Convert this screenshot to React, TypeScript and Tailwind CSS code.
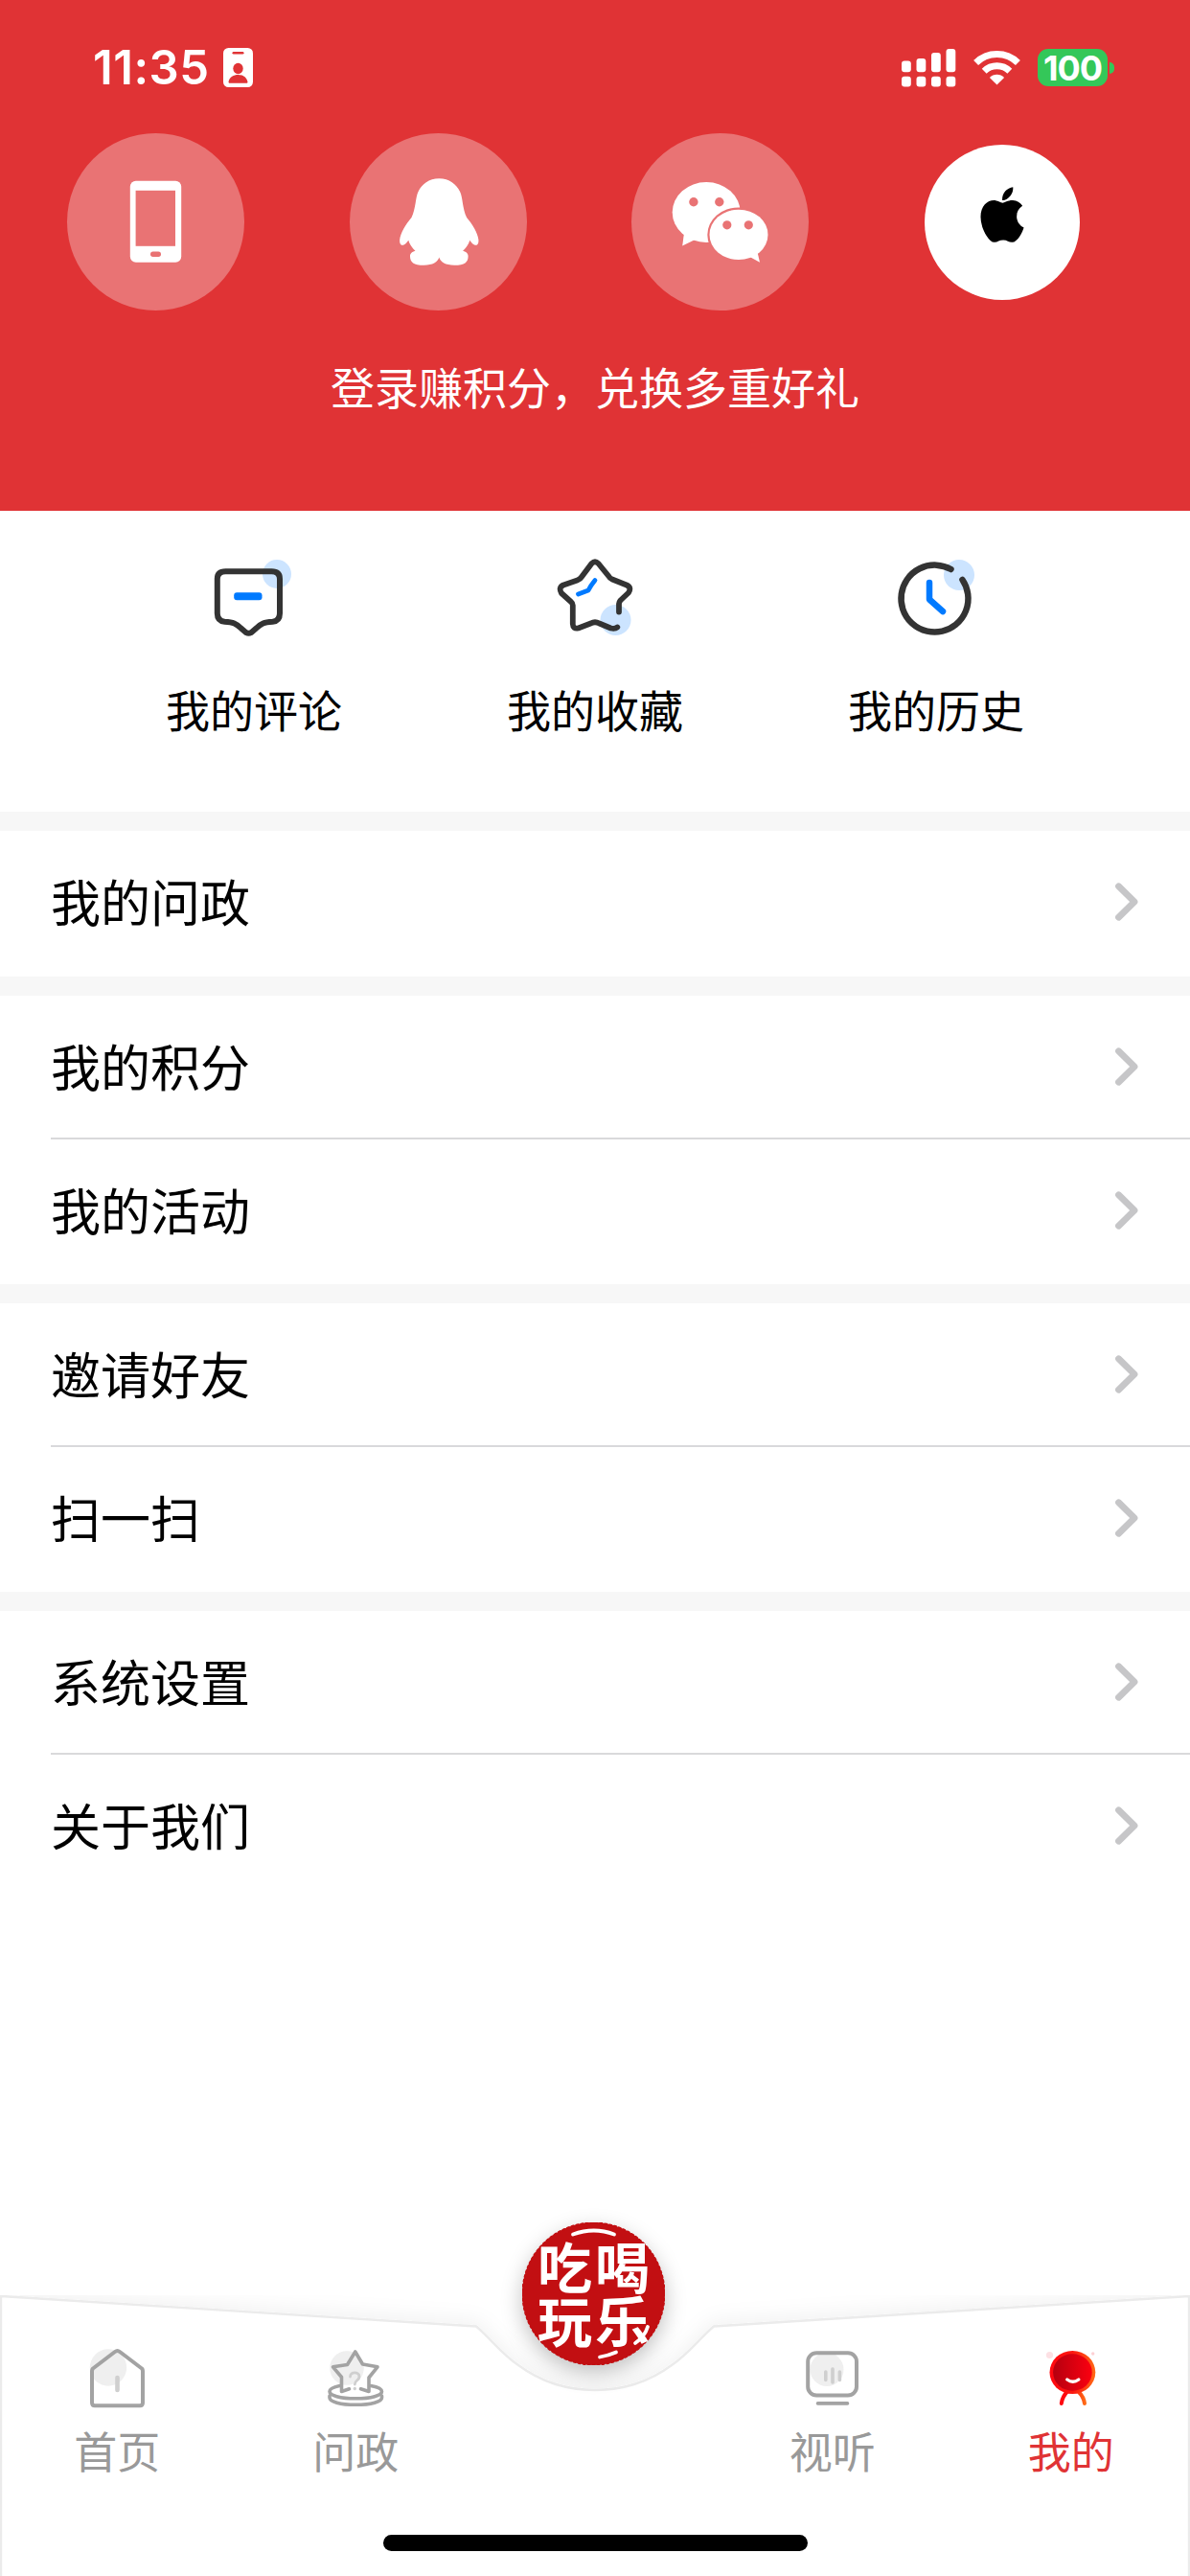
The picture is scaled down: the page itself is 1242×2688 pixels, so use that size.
import type { ReactNode } from "react";
import { FaApple } from "react-icons/fa";

function BadgeIcon() {
  return (
    <svg className="h-[41px] w-[31px]" viewBox="0 0 31 41">
      <rect width="31" height="41" rx="5.5" fill="#fff" />
      <rect x="9.5" y="4" width="12" height="2.6" rx="1.3" fill="#e03335" />
      <ellipse cx="15.5" cy="21.5" rx="5.2" ry="5.8" fill="#e03335" />
      <path d="M5.5 35.5C6.5 30 11 28 15.500 28S24.500 30 25.500 35.500C25.500 36.500 25 36.800 24 36.800H7C6 36.800 5.500 36.500 5.500 35.500Z" fill="#e03335" />
    </svg>
  );
}

function SignalIcon() {
  const tops = [12.5, 10, 4, 0];
  return (
    <svg className="h-[40px] w-[57px]" viewBox="0 0 57 40" fill="#fff">
      {tops.map((top, i) => (
        <g key={i}>
          <rect x={i * 15.5} y={top} width="9.8" height={24.3 - top} rx="3" />
          <rect x={i * 15.5} y="28.800" width="9.800" height="10.700" rx="3" />
        </g>
      ))}
    </svg>
  );
}

function WifiIcon() {
  return (
    <svg className="h-[37px] w-[49px]" viewBox="0 0 49 37">
      <g fill="none" stroke="#fff" strokeWidth="7">
        <path d="M2.600 13.400A31.200 31.200 0 0 1 46.400 13.400" />
        <path d="M11.200 22.300A19 19 0 0 1 37.800 22.300" />
      </g>
      <path d="M24.500 36.600L16.900 28.900A10.800 10.800 0 0 1 32.100 28.900Z" fill="#fff" />
    </svg>
  );
}

function StatusBar() {
  return (
    <div className="flex h-[139px] items-center justify-between pt-[2px] pr-[79px] pl-[97px]">
      <div className="flex items-center">
        <span className="w-[136px] font-[Inter] text-[49px] leading-none font-semibold tracking-[0.500px] whitespace-nowrap text-white">11:35</span>
        <BadgeIcon />
      </div>
      <div className="flex items-center">
        <SignalIcon />
        <div className="w-[18px]" />
        <WifiIcon />
        <div className="w-[18px]" />
        <div className="flex h-[39px] w-[73px] items-center justify-center rounded-[11px] bg-[#34c759] font-[Inter] text-[36px] leading-none font-bold tracking-[-1px] text-white">
          100
        </div>
        <div className="ml-[2px] h-[12px] w-[5px] rounded-r-full bg-[#34c759]" />
      </div>
    </div>
  );
}

function Disc({ children }: { children: ReactNode }) {
  return <div className="size-[185px] rounded-full bg-[#e97374]">{children}</div>;
}

function PhoneLogin() {
  return (
    <Disc>
      <svg className="size-full" viewBox="70 139 185 185">
        <rect x="135.800" y="188.700" width="53.400" height="85" rx="6" fill="#fff" />
        <rect x="141.600" y="198.800" width="41.400" height="58" fill="#e97374" />
        <rect x="157" y="262.500" width="11" height="5.500" rx="2.700" fill="#e97374" />
      </svg>
    </Disc>
  );
}

function QqLogin() {
  return (
    <Disc>
      <svg className="size-full" viewBox="364.500 139 185 185">
        <path
          d="M457.800 186.300C447 186.500 440 192 436 200C433 206 433.500 218 429 227C423 234 417.500 243 416.700 250C416.300 255 418 256.500 421 255.500C423.500 254.500 424.500 252 425.800 250.700C427 255 429.500 258.500 433 261.700C429 263 427.400 264.500 427.500 267.500C427.500 273.500 431 276.800 442 276.800C451 276.800 456.500 273.500 457.800 268.600C459.100 273.500 464.600 276.800 473.600 276.800C484.600 276.800 488.100 273.500 488.100 267.500C488.200 264.500 486.600 263 482.600 261.700C486.100 258.500 488.600 255 489.800 250.700C491.100 252 492.100 254.500 494.600 255.500C497.600 256.500 499.300 255 498.900 250C498.100 243 492.600 234 486.600 227C482.100 218 482.600 206 479.600 200C475.600 192 468.600 186.500 457.800 186.300Z"
          fill="#fff"
        />
      </svg>
    </Disc>
  );
}

function WechatLogin() {
  return (
    <Disc>
      <svg className="size-full" viewBox="659.500 139 185 185">
        <g fill="#fff">
          <ellipse cx="737.700" cy="221.500" rx="35.500" ry="31.500" />
          <path d="M714.500 243L712.700 256.500L727 249.500Z" />
        </g>
        <ellipse cx="771.500" cy="244.900" rx="32.700" ry="28.500" fill="#e97374" />
        <g fill="#fff">
          <ellipse cx="771.500" cy="244.900" rx="30.500" ry="26.200" />
          <path d="M783 268L793.500 273.800L791 263Z" />
        </g>
        <g fill="#e97374">
          <circle cx="724.400" cy="210.700" r="4.700" />
          <circle cx="751.300" cy="210.700" r="4.700" />
          <circle cx="759.300" cy="234.800" r="4.600" />
          <circle cx="781.800" cy="234.800" r="4.600" />
        </g>
      </svg>
    </Disc>
  );
}

function AppleLogin() {
  return (
    <div className="flex size-[185px] items-center justify-center">
      <div className="flex size-[162px] items-center justify-center rounded-full bg-white pb-[15px]">
        <FaApple preserveAspectRatio="none" className="h-[66px] w-[46px] text-black" />
      </div>
    </div>
  );
}

function CommentIcon() {
  return (
    <svg className="h-[84px] w-[84px]" viewBox="223.500 581 84 84">
      <circle cx="289.500" cy="599" r="15" fill="#cce4ff" />
      <path d="M236 596.300H284Q292.500 596.300 292.500 604V640Q292.500 648 285 648.700C276 649.300 273 650.500 268 655.500L262.500 660.200Q260 661.500 257.500 660.200L252 655.500C247 650.500 244 649.300 235 648.700Q227.300 648 227.300 640V604Q227.300 596.300 236 596.300Z" fill="none" stroke="#333" strokeWidth="6" strokeLinejoin="round" />
      <rect x="244.700" y="618.200" width="29.300" height="8" rx="3" fill="#007aff" />
    </svg>
  );
}

function StarIcon() {
  return (
    <svg className="h-[84px] w-[84px]" viewBox="578.500 581 84 84">
      <circle cx="642" cy="647" r="16" fill="#cce4ff" />
      <g fill="none" strokeLinecap="round" strokeLinejoin="round">
        <path d="M645.500 638.500V630Q645.500 628.500 647 626.500L655.500 618.500Q659 613 653.500 610.500L638.500 604.500Q636 603.500 635 601.500L624 588Q620.500 584.500 617 588L606.500 602Q605 604.500 602 605.500L587.500 610.500Q582 613 585.500 619L595.500 628Q597.300 629.500 597.300 631.500V651Q597.500 656.500 603 655.500L616 650.500Q620.500 648 625 650.500L637 655.500Q641.500 656.500 643.800 654.500" stroke="#333" strokeWidth="5.800" />
        <path d="M603 620L613.500 616Q616 611 620.500 605.500" stroke="#007aff" strokeWidth="4.800" />
      </g>
    </svg>
  );
}

function HistoryIcon() {
  return (
    <svg className="h-[84px] w-[84px]" viewBox="934 581 84 84">
      <circle cx="1000" cy="600" r="16" fill="#cce4ff" />
      <g fill="none" strokeLinecap="round" strokeLinejoin="round">
        <path d="M991.500 594A35 35 0 1 0 1003.500 605" stroke="#333" strokeWidth="6.500" />
        <path d="M969 608V625.500L983 638" stroke="#007aff" strokeWidth="6.500" />
      </g>
    </svg>
  );
}

const shortcuts = [
  { label: "我的评论", icon: <CommentIcon /> },
  { label: "我的收藏", icon: <StarIcon /> },
  { label: "我的历史", icon: <HistoryIcon /> },
];

const menuGroups = [["我的问政"], ["我的积分", "我的活动"], ["邀请好友", "扫一扫"], ["系统设置", "关于我们"]];

function Chevron() {
  return (
    <svg className="h-[40px] w-[24px]" viewBox="0 0 24 40">
      <path d="M3.500 3.800L20 20L3.500 36.200" fill="none" stroke="#c6c6c8" strokeWidth="6.800" strokeLinecap="round" strokeLinejoin="round" />
    </svg>
  );
}

function MenuRow({ label, divided }: { label: string; divided: boolean }) {
  return (
    <div className={divided ? "ml-[53px] h-[149px] border-t-2 border-[#d9d9db]" : "ml-[53px] h-[148px]"}>
      <div className="flex h-full items-center justify-between pr-[54px]">
        <span className="pb-[2px] text-[52px] leading-[60px] text-black">{label}</span>
        <Chevron />
      </div>
    </div>
  );
}

function HomeIcon() {
  return (
    <svg className="h-[66px] w-[66px]" viewBox="89 2449 66 66">
      <circle cx="113" cy="2470.500" r="19.200" fill="#efefef" />
      <g fill="none" strokeLinejoin="round" strokeLinecap="round">
        <path d="M120 2454Q122.500 2452 125 2454L148 2471.500Q149 2472.500 149 2474V2507Q149 2510.300 146 2510.300H99Q96 2510.300 96 2507V2474Q96 2472.500 97 2471.500Z" stroke="#a3a3a3" strokeWidth="4" />
        <path d="M122.500 2481V2494" stroke="#cfcfcf" strokeWidth="4.600" />
      </g>
    </svg>
  );
}

function PoliticsIcon() {
  return (
    <svg className="h-[66px] w-[66px]" viewBox="337 2449 66 66">
      <circle cx="361" cy="2471" r="17.800" fill="#efefef" />
      <g fill="none" stroke="#a3a3a3" strokeWidth="3.600" strokeLinejoin="round" strokeLinecap="round">
        <path d="M353.500 2489.500C346 2491 343 2493 343 2495.500C343 2499.500 354 2502.800 370.300 2502.800C386.500 2502.800 397.500 2499.500 397.500 2495.500C397.500 2493 394.500 2491 386 2489.500" />
        <path d="M343 2500V2502C343 2506 354 2509.300 370.300 2509.300C386.500 2509.300 397.500 2506 397.500 2502V2500" />
        <path d="M363.500 2492.800L355.500 2495.500V2480.500L346.500 2469.800L361.500 2467.500L369.800 2454L377.500 2467L393 2469.800L384 2481V2495.500L375.500 2492.800" />
      </g>
      <path d="M364.500 2480C364.500 2474.500 374 2474.500 374 2480C374 2484 369.500 2483.500 369.300 2488" fill="none" stroke="#cfcfcf" strokeWidth="2.800" strokeLinecap="round" />
      <circle cx="369.300" cy="2492.500" r="1.700" fill="#cfcfcf" />
    </svg>
  );
}

function MediaIcon() {
  return (
    <svg className="h-[66px] w-[66px]" viewBox="834 2449 66 66">
      <circle cx="861" cy="2472.500" r="17.500" fill="#efefef" />
      <rect x="841.200" y="2455.200" width="50.800" height="44.300" rx="9" fill="none" stroke="#a3a3a3" strokeWidth="4" />
      <g strokeLinecap="round" stroke="#cfcfcf" strokeWidth="3.600">
        <path d="M859.800 2475V2483.500M867 2472V2486M874.400 2475V2483.500" />
        <path d="M851.500 2507.900H882.500" stroke="#a3a3a3" />
      </g>
    </svg>
  );
}

function ProfileIcon() {
  return (
    <svg className="h-[66px] w-[66px]" viewBox="1083 2449 66 66">
      <defs>
        <linearGradient id="rim" x1="0" x2="1">
          <stop offset="0" stopColor="#ff0710" />
          <stop offset="0.500" stopColor="#fb1710" />
          <stop offset="1" stopColor="#ff6a16" />
        </linearGradient>
        <linearGradient id="face" x1="0" x2="1">
          <stop offset="0" stopColor="#b5000f" />
          <stop offset="1" stopColor="#fb0010" />
        </linearGradient>
      </defs>
      <circle cx="1093.500" cy="2457.500" r="3.600" fill="#fde0e4" />
      <circle cx="1138.700" cy="2456" r="1.700" fill="#fdd0d4" />
      <path d="M1105.800 2508C1106.500 2503 1108.500 2499 1112 2495.500H1123.500C1127 2499 1129.500 2503 1130 2508" fill="none" stroke="url(#rim)" strokeWidth="4" strokeLinecap="round" />
      <ellipse cx="1117.400" cy="2475.500" rx="23.900" ry="22.500" fill="url(#rim)" />
      <ellipse cx="1117.400" cy="2475.500" rx="20.300" ry="19.300" fill="url(#face)" />
      <path d="M1111.800 2483Q1117.800 2487.500 1123.800 2483" fill="none" stroke="#fff" strokeWidth="3.400" strokeLinecap="round" />
    </svg>
  );
}

function Tab({ label, icon, active = false }: { label: string; icon: ReactNode; active?: boolean }) {
  return (
    <div className="flex w-[248.500px] flex-col items-center pt-[54px]">
      {icon}
      <span className={active ? "mt-[12px] text-[45px] leading-[60px] text-[#e03335]" : "mt-[12px] text-[45px] leading-[60px] text-[#999]"}>{label}</span>
    </div>
  );
}

function Seal() {
  return (
    <div className="absolute top-[-76px] left-[545px] size-[149px] rounded-full bg-[#c20f12] shadow-[0_8px_22px_rgba(0,0,0,0.25)]">
      <svg className="absolute inset-0 size-full" viewBox="0 0 149 149" fill="none" stroke="#fff" strokeWidth="3.800" strokeLinecap="round">
        <circle cx="74.500" cy="74.500" r="74" stroke="#c20f12" strokeWidth="2" strokeDasharray="2 3" />
        <path d="M53 12.500Q75 4.500 96 12.500" />
        <path d="M81 140.500Q90 139 98 135.500" />
        <path d="M118 126Q128 119 131 109" />
      </svg>
      <div className="relative grid h-full grid-cols-[58px_58px] grid-rows-[56px_56px] justify-center gap-x-[2px] pt-[16px] text-[57px] leading-[56px] font-bold text-white">
        <span className="text-center">吃</span>
        <span className="text-center">喝</span>
        <span className="text-center">玩</span>
        <span className="text-center">乐</span>
      </div>
    </div>
  );
}

function TabBar() {
  return (
    <div className="relative mt-auto h-[293px]">
      <svg className="absolute inset-0 h-full w-full" viewBox="0 0 1242 293">
        <defs>
          <filter id="lift" x="-10%" y="-20%" width="120%" height="140%">
            <feDropShadow dx="0" dy="-5" stdDeviation="10" floodColor="#000" floodOpacity="0.050" />
          </filter>
        </defs>
        <path
          d="M1 1L497 32.500C514 47 522 60 541 73C564 90 590 99 621 99C652 99 678 90 701 73C720 60 728 47 745 32.500L1241 1V310H1Z"
          fill="#fff"
          stroke="#ebebeb"
          strokeWidth="2.400"
          filter="url(#lift)"
        />
      </svg>
      <div className="relative -ml-[2px] flex justify-between">
        <Tab label="首页" icon={<HomeIcon />} />
        <Tab label="问政" icon={<PoliticsIcon />} />
        <div className="w-[248px]" />
        <Tab label="视听" icon={<MediaIcon />} />
        <Tab label="我的" icon={<ProfileIcon />} active />
      </div>
      <Seal />
      <div className="relative mx-auto mt-[58px] h-[17px] w-[443px] rounded-full bg-black" />
    </div>
  );
}

export default function App() {
  return (
    <div className="flex h-[2688px] w-[1242px] flex-col overflow-hidden bg-white font-['Noto_Sans_CJK_SC',sans-serif]">
      <header className="h-[533px] bg-[#e03335]">
        <StatusBar />
        <div className="flex gap-[109.600px] pl-[70px]">
          <PhoneLogin />
          <QqLogin />
          <WechatLogin />
          <AppleLogin />
        </div>
        <p className="mt-[48px] text-center text-[46px] leading-[60px] text-white">登录赚积分，兑换多重好礼</p>
      </header>

      <section className="flex h-[314px] justify-center gap-[172px] pt-[48px]">
        {shortcuts.map((item) => (
          <div key={item.label} className="flex w-[184px] flex-col items-center">
            {item.icon}
            <span className="mt-[44px] text-[46px] leading-[60px] whitespace-nowrap text-black">{item.label}</span>
          </div>
        ))}
      </section>

      {menuGroups.map((rows) => (
        <section key={rows[0]} className="border-t-[20px] border-[#f7f7f7] pb-[4px]">
          {rows.map((label, i) => (
            <MenuRow key={label} label={label} divided={i > 0} />
          ))}
        </section>
      ))}

      <TabBar />
    </div>
  );
}
